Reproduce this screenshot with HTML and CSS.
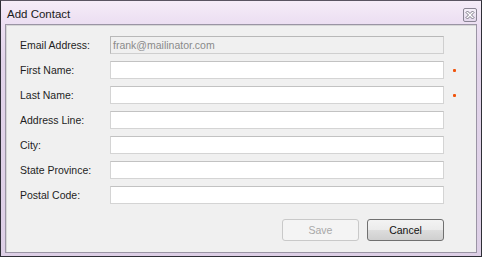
FILE: index.html
```html
<!DOCTYPE html>
<html>
<head>
<meta charset="utf-8">
<link rel="stylesheet" href="styles.css">
</head>
<body>
<div class="window">
  <div class="titlebar">
    <span class="title">Add Contact</span>
    <span class="close">
      <svg width="10" height="10" viewBox="0 0 10 10">
        <path d="M1 2.5 L2.5 1 L5 3.5 L7.5 1 L9 2.5 L6.5 5 L9 7.5 L7.5 9 L5 6.5 L2.5 9 L1 7.5 L3.5 5 Z" fill="#fff" stroke="#6e6a78" stroke-width="0.9" stroke-linejoin="round"/>
      </svg>
    </span>
  </div>
  <div class="content">
    <div class="form">
      <label class="lbl">Email Address:</label>
      <div class="field disabled">frank@mailinator.com</div>
      <span class="req"></span>

      <label class="lbl">First Name:</label>
      <div class="field"></div>
      <span class="req"><i class="dot"></i></span>

      <label class="lbl">Last Name:</label>
      <div class="field"></div>
      <span class="req"><i class="dot"></i></span>

      <label class="lbl">Address Line:</label>
      <div class="field"></div>
      <span class="req"></span>

      <label class="lbl">City:</label>
      <div class="field"></div>
      <span class="req"></span>

      <label class="lbl">State Province:</label>
      <div class="field"></div>
      <span class="req"></span>

      <label class="lbl">Postal Code:</label>
      <div class="field"></div>
      <span class="req"></span>
    </div>
    <div class="buttons">
      <button class="btn btn-disabled">Save</button>
      <button class="btn btn-cancel">Cancel</button>
    </div>
  </div>
</div>
</body>
</html>
```

FILE: styles.css
```css
html, body {
  margin: 0;
  padding: 0;
  background: #ffffff;
}

.window {
  box-sizing: border-box;
  width: 482px;
  height: 257px;
  border: 1px solid #2e2e36;
  border-top-color: #5a5462;
  background: linear-gradient(#f5ecf8, #ecdff2 22px, #e2d4ea 60px, #ddcfe6);
  padding: 0 4px 3px 4px;
  display: flex;
  flex-direction: column;
  font-family: "Liberation Sans", Arial, sans-serif;
}

.titlebar {
  height: 23px;
  flex: none;
  display: flex;
  align-items: center;
  justify-content: space-between;
  padding: 0 0 0 2px;
}

.title {
  font-size: 11.5px;
  color: #1a1a1a;
  position: relative;
  top: 1px;
}

.close {
  box-sizing: border-box;
  width: 14px;
  height: 14px;
  border: 1px solid #8a8494;
  border-radius: 2px;
  background: linear-gradient(#f6f0f9, #e4d8ec);
  display: flex;
  align-items: center;
  justify-content: center;
  position: relative;
  top: 2px;
}

.close svg {
  display: block;
}

.content {
  flex: 1;
  box-sizing: border-box;
  border: 1px solid #9a94a4;
  box-shadow: inset 1px 1px 0 #d6d6d6;
  background: #f0f0f0;
  padding: 11px 0 0 14px;
  display: flex;
  flex-direction: column;
}

.form {
  display: grid;
  grid-template-columns: 90px 334px 20px;
  grid-auto-rows: 18px;
  row-gap: 7px;
  align-items: center;
}

.lbl {
  font-size: 10.5px;
  color: #1e1e1e;
}

.field {
  box-sizing: border-box;
  height: 18px;
  background: #ffffff;
  border: 1px solid #d4d4d4;
  border-top-color: #c2c2c2;
  font-size: 10.5px;
  color: #8a8a8a;
  padding: 0 2px;
  line-height: 16px;
}

.field.disabled {
  background: #f0f0f0;
  border-color: #b8b8b8;
  border-bottom-color: #cfcfcf;
  border-right-color: #cfcfcf;
}

.req {
  display: flex;
  align-items: center;
  padding-left: 9px;
}

.dot {
  width: 3px;
  height: 3px;
  background: #f0540c;
  border-radius: 1px;
  display: block;
}

.buttons {
  display: flex;
  gap: 8px;
  justify-content: flex-end;
  width: 424px;
  margin-top: 15px;
}

.btn {
  box-sizing: border-box;
  width: 77px;
  height: 22px;
  font-family: "Liberation Sans", Arial, sans-serif;
  font-size: 10.5px;
  border-radius: 3px;
  padding: 0;
}

.btn-disabled {
  background: #f4f4f4;
  border: 1px solid #c9c9c9;
  color: #a8a8a8;
}

.btn-cancel {
  background: linear-gradient(#f3f3f3, #ebebeb 50%, #dddddd 51%, #cfcfcf);
  border: 1px solid #707070;
  color: #111;
}
```
